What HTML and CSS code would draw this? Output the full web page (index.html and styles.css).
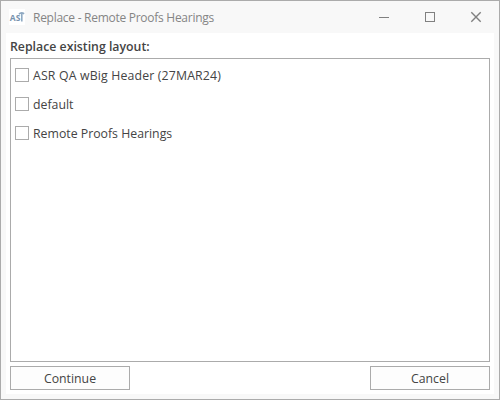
FILE: index.html
```
<!DOCTYPE html>
<html lang="en">
<head>
    <meta charset="UTF-8">
    <title>Replace - Remote Proofs Hearings</title>
    <link rel="stylesheet" href="styles.css">
</head>
<body>

<div class="window">
    <div class="titlebar">
        <svg class="logo" width="16" height="16" viewBox="0 0 16 16">
            <rect width="16" height="16" fill="#fff"/>
            <text class="logo-text" x="0.8" y="12">AS</text>
            <path d="M12.8 12.5V4.5M10 5.3Q12 2.8 15.2 4.8" fill="none" stroke="#8fa9c2" stroke-width="1.6"/>
        </svg>
        <span class="title">Replace - Remote Proofs Hearings</span>
        <div class="window-buttons">
            <svg width="46" height="32" viewBox="0 0 46 32">
                <path d="M18 16.5H28"/>
            </svg>
            <svg width="46" height="32" viewBox="0 0 46 32">
                <rect x="18.5" y="11.5" width="9" height="9"/>
            </svg>
            <svg class="close" width="46" height="32" viewBox="0 0 46 32">
                <path d="M18.3 11.3L27.7 20.7M27.7 11.3L18.3 20.7"/>
            </svg>
        </div>
    </div>

    <div class="content">
        <div class="heading">Replace existing layout:</div>
        <div class="layout-list">
            <label class="layout"><input type="checkbox"><span class="wide">ASR QA wBig Header (27MAR24)</span></label>
            <label class="layout"><input type="checkbox"><span>default</span></label>
            <label class="layout"><input type="checkbox"><span>Remote Proofs Hearings</span></label>
        </div>
        <div class="actions">
            <button>Continue</button>
            <button>Cancel</button>
        </div>
    </div>
</div>

</body>
</html>
```
FILE: styles.css
```
* {
    margin: 0;
    padding: 0;
    box-sizing: border-box;
}

body {
    font-family: 'Open Sans', 'Noto Sans', sans-serif;
    font-size: 12.3px;
    color: #444;
}

.window {
    display: flex;
    flex-direction: column;
    width: 500px;
    height: 400px;
    padding: 0 5px 5px;
    border: 1px solid #ababab;
    background: #f8f8f8;
}

.titlebar {
    display: flex;
    align-items: center;
    height: 32px;
    margin-right: -5px;
    padding-left: 3px;
}

.logo {
    margin-right: 8px;
}

.logo-text {
    font-size: 8.5px;
    font-weight: bold;
    fill: #7893ae;
}

.title {
    position: relative;
    top: 1px;
    font-size: 12px;
    line-height: 16px;
    letter-spacing: -0.27px;
    color: #858585;
}

.window-buttons {
    display: flex;
    margin-left: auto;
}

.window-buttons svg {
    fill: none;
    stroke: #808080;
    stroke-width: 1;
}

.window-buttons .close {
    stroke-width: 1.4;
}

.content {
    display: flex;
    flex: 1;
    flex-direction: column;
    padding: 4px;
    background: #fff;
}

.heading {
    height: 21px;
    font-weight: 600;
    line-height: 19px;
}

.layout-list {
    display: flex;
    flex: 1;
    flex-direction: column;
    gap: 9px;
    padding: 6px 4px;
    border: 1px solid #ababab;
}

.layout {
    display: flex;
    align-items: center;
    gap: 4px;
    height: 20px;
}

.layout input {
    appearance: none;
    width: 14px;
    height: 14px;
    border: 1px solid #ababab;
    background: #fff;
}

.layout .wide {
    letter-spacing: 0.16px;
}

.actions {
    display: flex;
    justify-content: space-between;
    margin-top: 4px;
}

.actions button {
    width: 120px;
    height: 24px;
    border: 1px solid #ababab;
    background: #fdfdfd;
    font: inherit;
    color: #444;
}
```
